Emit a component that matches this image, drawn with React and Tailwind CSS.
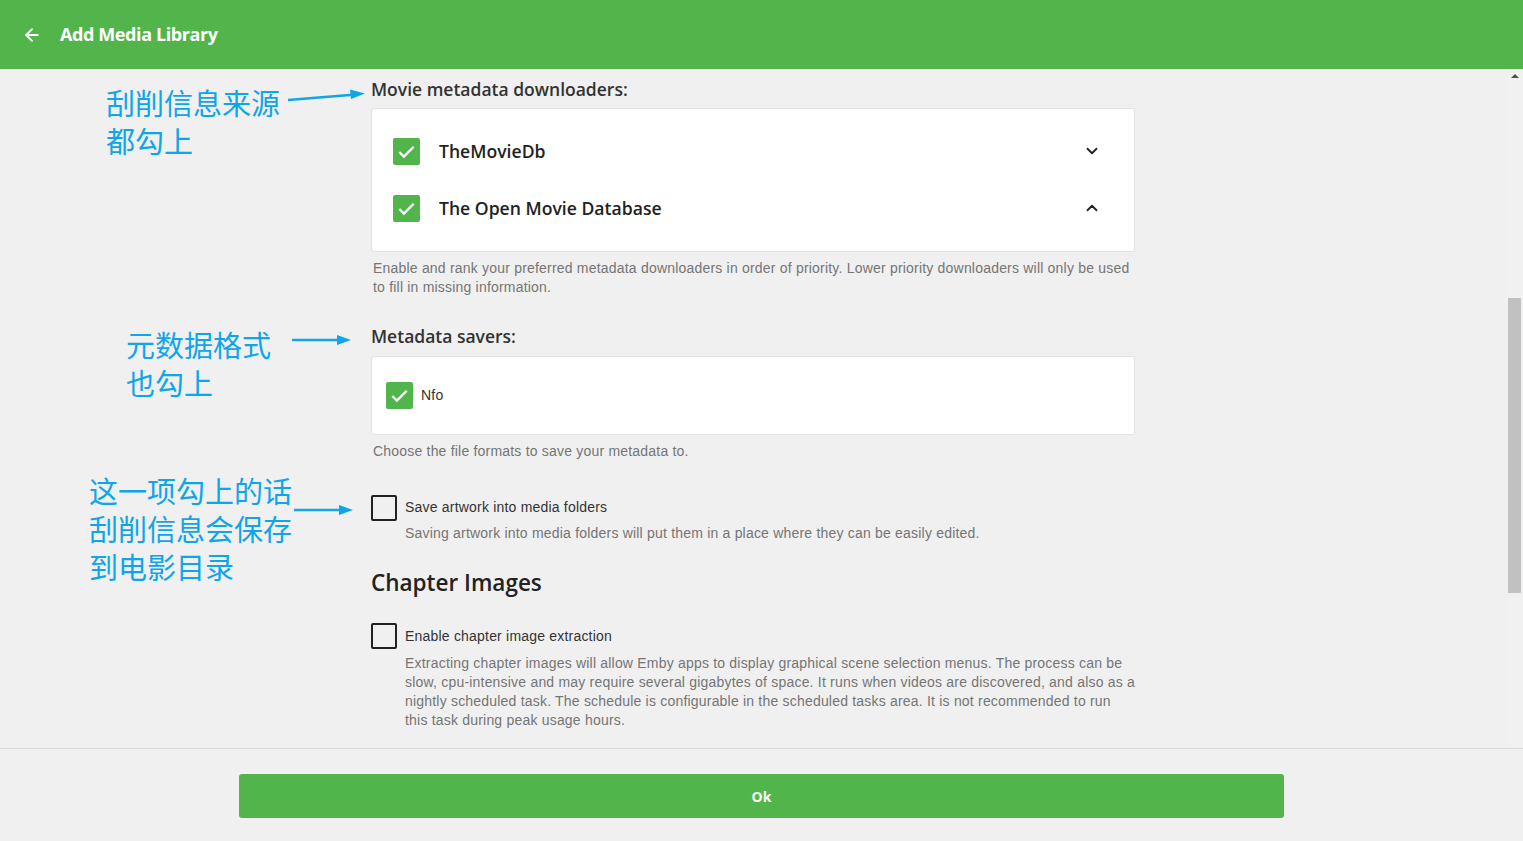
import React from "react";
import { ArrowLeft, ChevronDown, ChevronUp } from "lucide-react";

const sans = { fontFamily: '"Open Sans", "Noto Sans", sans-serif' };
const arial = { fontFamily: '"Liberation Sans", Arial, sans-serif', letterSpacing: "0.2px" };
const cjk = { fontFamily: '"Noto Sans CJK SC", "Noto Sans", sans-serif' };

const Checked = ({ className = "" }) => (
  <div className={"flex items-center justify-center rounded-[2px] bg-[#52b54b] " + className}>
    <svg viewBox="0 0 24 24" className="h-[23px] w-[23px]" fill="none" stroke="white" strokeWidth="2.4">
      <path d="M4.5 12.5l4.8 4.8L19.5 7" />
    </svg>
  </div>
);

const Empty = () => (
  <div className="h-[26px] w-[26px] shrink-0 rounded-[2px] border-2 border-[#222]" />
);

const App = () => {
  return (
    <div className="relative flex h-screen flex-col overflow-hidden bg-[#f0f0f0]">
      {/* header */}
      <div className="flex h-[69px] shrink-0 items-center bg-[#52b54b] px-[22px] text-white" style={sans}>
        <ArrowLeft className="h-[20px] w-[20px]" strokeWidth={2.2} />
        <span className="ml-[18px] text-[18px] font-bold tracking-[-0.4px]">Add Media Library</span>
      </div>

      {/* scroll area */}
      <div className="flex min-h-0 flex-1">
        <div className="flex-1 overflow-hidden">
          <div className="mx-auto w-[764px] pt-[7px]">
            <h3 className="text-[17.5px] font-semibold text-[#333]" style={sans}>Movie metadata downloaders:</h3>
            <div className="mt-[6px] rounded-[3px] border border-[#e2e2e2] bg-white px-[21px] pt-[28px] pb-[29px]">
              <div className="flex h-[28px] items-center">
                <Checked className="h-[27px] w-[27px]" />
                <span className="ml-[19px] flex-1 text-[17.6px] font-semibold text-[#222]" style={sans}>TheMovieDb</span>
                <ChevronDown className="mr-[12px] h-[18px] w-[18px] text-[#222]" strokeWidth={2.4} />
              </div>
              <div className="mt-[29px] flex h-[28px] items-center">
                <Checked className="h-[27px] w-[27px]" />
                <span className="ml-[19px] flex-1 text-[17.6px] font-semibold text-[#222]" style={sans}>The Open Movie Database</span>
                <ChevronUp className="mr-[12px] h-[18px] w-[18px] text-[#222]" strokeWidth={2.4} />
              </div>
            </div>
            <p className="mt-[7px] pl-[2px] text-[14px] leading-[19px] text-[#757575]" style={arial}>
              Enable and rank your preferred metadata downloaders in order of priority. Lower priority downloaders will only be used to fill in missing information.
            </p>

            <h3 className="mt-[26px] text-[17.5px] font-semibold text-[#333]" style={sans}>Metadata savers:</h3>
            <div className="mt-[6px] flex h-[79px] items-center rounded-[3px] border border-[#e2e2e2] bg-white px-[14px]">
              <Checked className="h-[27px] w-[27px]" />
              <span className="ml-[8px] text-[14px] text-[#333]" style={arial}>Nfo</span>
            </div>
            <p className="mt-[7px] pl-[2px] text-[14px] leading-[19px] text-[#757575]" style={arial}>
              Choose the file formats to save your metadata to.
            </p>

            <div className="mt-[34px] flex items-center gap-[8px]">
              <Empty />
              <span className="text-[14px] text-[#333]" style={arial}>Save artwork into media folders</span>
            </div>
            <p className="mt-[3px] pl-[34px] text-[14px] leading-[19px] text-[#757575]" style={arial}>
              Saving artwork into media folders will put them in a place where they can be easily edited.
            </p>

            <h2 className="mt-[23px] text-[22.5px] font-semibold text-[#222]" style={sans}>Chapter Images</h2>

            <div className="mt-[24px] flex items-center gap-[8px]">
              <Empty />
              <span className="text-[14px] text-[#333]" style={arial}>Enable chapter image extraction</span>
            </div>
            <p className="mt-[5px] pl-[34px] text-[14px] leading-[19px] text-[#757575]" style={arial}>
              Extracting chapter images will allow Emby apps to display graphical scene selection menus. The process can be slow, cpu-intensive and may require several gigabytes of space. It runs when videos are discovered, and also as a nightly scheduled task. The schedule is configurable in the scheduled tasks area. It is not recommended to run this task during peak usage hours.
            </p>
          </div>
        </div>

        {/* scrollbar */}
        <div className="flex w-[17px] shrink-0 flex-col items-center bg-[#f1f1f1]">
          <div className="mt-[5px] h-0 w-0 border-x-[4px] border-b-[4px] border-x-transparent border-b-[#505050]" />
          <div className="mt-[220px] h-[295px] w-[13px] bg-[#c1c1c1]" />
        </div>
      </div>

      {/* footer */}
      <div className="flex h-[93px] shrink-0 items-start justify-center border-t border-[#dadada] bg-[#f0f0f0] pt-[25px]">
        <button className="h-[44px] w-[1045px] rounded-[3px] bg-[#52b54b] text-[14px] font-bold text-white" style={sans}>
          Ok
        </button>
      </div>

      {/* annotations */}
      <div className="absolute left-[106px] top-[83px] text-[29px] leading-[38px] text-[#0ea5e9]" style={cjk}>
        刮削信息来源<br />都勾上
      </div>
      <div className="absolute left-[288px] top-[88px]">
        <svg width="80" height="16" className="overflow-visible">
          <line x1="0" y1="12" x2="68" y2="6.5" stroke="#0ea5e9" strokeWidth="2.5" />
          <path d="M62 1.5 L77 5.5 L63 11 Z" fill="#0ea5e9" />
        </svg>
      </div>

      <div className="absolute left-[126px] top-[325px] text-[29px] leading-[38px] text-[#0ea5e9]" style={cjk}>
        元数据格式<br />也勾上
      </div>
      <div className="absolute left-[292px] top-[333px]">
        <svg width="60" height="14" className="overflow-visible">
          <line x1="0" y1="7" x2="50" y2="7" stroke="#0ea5e9" strokeWidth="2.5" />
          <path d="M45 2 L59 7 L45 12 Z" fill="#0ea5e9" />
        </svg>
      </div>

      <div className="absolute left-[89px] top-[471px] text-[29px] leading-[38px] text-[#0ea5e9]" style={cjk}>
        这一项勾上的话<br />刮削信息会保存<br />到电影目录
      </div>
      <div className="absolute left-[294px] top-[503px]">
        <svg width="60" height="14" className="overflow-visible">
          <line x1="0" y1="7" x2="50" y2="7" stroke="#0ea5e9" strokeWidth="2.5" />
          <path d="M45 2 L59 7 L45 12 Z" fill="#0ea5e9" />
        </svg>
      </div>
    </div>
  );
};

export default App;
